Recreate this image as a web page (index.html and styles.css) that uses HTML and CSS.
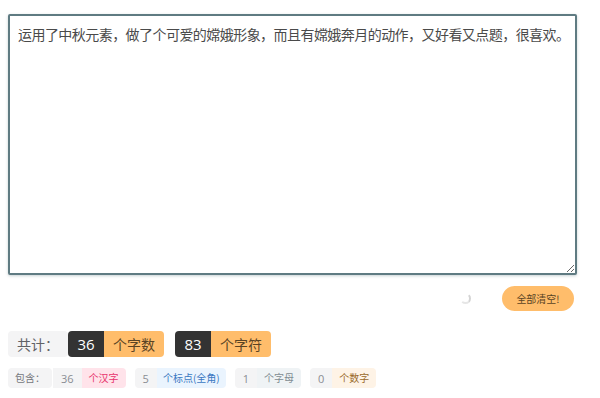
FILE: index.html
```html
<!DOCTYPE html>
<html lang="zh">
<head>
<meta charset="utf-8" />
<title>字数统计</title>
<link rel="stylesheet" href="styles.css">
</head>
<body>
<div id="counter">
  <textarea class="input">运用了中秋元素，做了个可爱的嫦娥形象，而且有嫦娥奔月的动作，又好看又点题，很喜欢。</textarea>

  <div class="actions">
    <span class="spinner"></span>
    <button class="clear">全部清空!</button>
  </div>

  <div class="total">
    <span class="tag tag-label">共计：</span>
    <span class="group">
      <span class="tag tag-dark">36</span><span class="tag tag-orange">个字数</span>
    </span>
    <span class="group">
      <span class="tag tag-dark">83</span><span class="tag tag-orange">个字符</span>
    </span>
  </div>

  <div class="detail">
    <span class="group">
      <span class="mini mini-label">包含：</span><span class="mini mini-num">36</span><span class="mini mini-pink">个汉字</span>
    </span>
    <span class="group">
      <span class="mini mini-num">5</span><span class="mini mini-blue">个标点(全角)</span>
    </span>
    <span class="group">
      <span class="mini mini-num">1</span><span class="mini mini-grey">个字母</span>
    </span>
    <span class="group">
      <span class="mini mini-num">0</span><span class="mini mini-peach">个数字</span>
    </span>
  </div>
</div>
</body>
</html>
```

FILE: styles.css
```css
body { margin: 0; background: #fff; font-family: "Noto Sans CJK SC", "Noto Sans", sans-serif; }
#counter { padding: 14px 23px 0 8px; }

.input { display: block; box-sizing: border-box; width: 100%; height: 261px; margin: 0; padding: 8px 0 8px 8px; border: 2px solid #5f7b82; border-radius: 2px; box-shadow: 0 1px 3px rgba(95, 123, 130, .35); font-family: "Noto Sans CJK SC", sans-serif; font-size: 14px; letter-spacing: -0.55px; line-height: 21px; color: #4a4a4a; outline: none; resize: vertical; }

.actions { display: flex; align-items: center; justify-content: flex-end; gap: 31px; margin-top: 11px; padding-right: 3px; }
.spinner { width: 7px; height: 7px; border-radius: 50%; border: 2px solid transparent; border-right-color: #d4d4d4; border-bottom-color: #e6e6e6; }
.clear { width: 72px; height: 25px; padding: 0; border: none; border-radius: 13px; background: #ffbd6b; color: #5a4424; font-family: "Noto Sans CJK SC", sans-serif; font-size: 10px; }

.total { display: flex; align-items: center; gap: 11px; margin-top: 20px; }
.detail { display: flex; align-items: center; gap: 9px; margin-top: 11px; }
.group { display: flex; }

.tag { display: inline-flex; align-items: center; height: 26px; padding: 0 9px; font-size: 14px; line-height: 1; }
.tag-label { background: #f4f4f5; color: #606266; border-radius: 4px; width: 42px; justify-content: center; margin-right: -11px; }
.tag-dark { background: #333; color: #fff; border-radius: 4px 0 0 4px; font-family: "Open Sans", sans-serif; font-size: 15px; width: 18px; justify-content: center; }
.tag-orange { background: #ffbd6b; color: #5a4424; border-radius: 0 4px 4px 0; }

.mini { display: inline-flex; align-items: center; height: 20px; padding: 0 8px; font-size: 10px; line-height: 1; }
.mini-label { background: #f4f4f5; color: #74777c; border-radius: 4px; padding: 0 7px; }
.mini-num { background: #f4f4f5; color: #8a8d93; border-radius: 4px 0 0 4px; font-family: "Open Sans", sans-serif; font-size: 11px; }
.mini-label + .mini-num { border-radius: 0; margin-left: 1px; }
.mini-pink { background: #ffe3ea; color: #e8336d; border-radius: 0 4px 4px 0; padding: 0 7px; }
.mini-blue { background: #eaf4fe; color: #3a78c2; border-radius: 0 4px 4px 0; padding: 0 6px; }
.mini-grey { background: #eff3f5; color: #7f8c92; border-radius: 0 4px 4px 0; padding: 0 7px; }
.mini-peach { background: #fef3e6; color: #9a6a2a; border-radius: 0 4px 4px 0; padding: 0 7px; }
```
